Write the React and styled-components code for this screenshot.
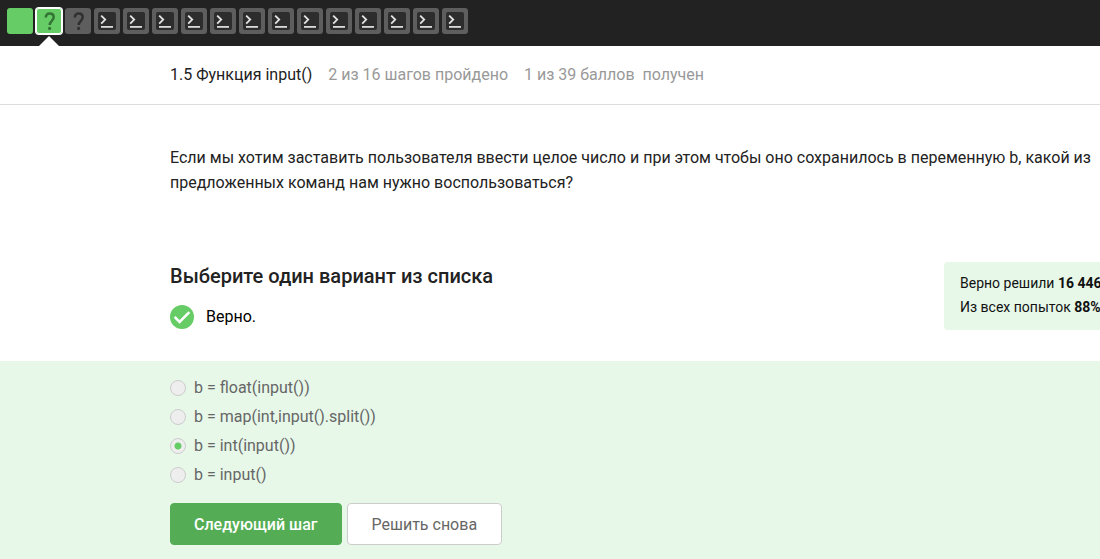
import React, { useState } from "react";
import styled, { createGlobalStyle } from "styled-components";

const GlobalStyle = createGlobalStyle`
  *, *::before, *::after { box-sizing: border-box; }
  body {
    margin: 0;
    background: #fff;
    color: #222;
    font-family: Roboto, "Liberation Sans", sans-serif;
    font-size: 16px;
    line-height: 24px;
    overflow-x: hidden;
  }
`;

const StepBar = styled.nav`
  display: flex;
  gap: 3px;
  height: 46px;
  padding: 8px 7px;
  background: #222;
`;

const StepLink = styled.a`
  position: relative;
  display: block;
  width: 26px;
  height: 26px;
  border-radius: 3px;
  background: ${(p) => (p.$passed ? "#66cc66" : "#5e5e5e")};
  box-shadow: ${(p) => (p.$current ? "0 0 0 1px #fff, inset 0 0 0 1px #fff" : "none")};

  &::after {
    content: "";
    display: ${(p) => (p.$current ? "block" : "none")};
    position: absolute;
    top: 28px;
    left: 3px;
    border: 10px solid transparent;
    border-top: 0;
    border-bottom-color: #fff;
  }

  svg { display: block; }
`;

const LessonHeader = styled.header`
  display: flex;
  align-items: center;
  gap: 16px;
  height: 59px;
  padding-left: 170px;
  border-bottom: 1px solid #ddd;
`;

const LessonTitle = styled.h1`
  margin: 0;
  font-size: 16px;
  font-weight: 400;
`;

const Progress = styled.span`
  color: #999;
  white-space: pre;
`;

const Question = styled.p`
  margin: 0;
  padding: 40px 8px 0 170px;
  line-height: 25px;
`;

const ResultRow = styled.section`
  display: flex;
  justify-content: space-between;
  padding: 67px 0 31px 170px;
`;

const TaskTitle = styled.h2`
  margin: 0;
  font-size: 20px;
  font-weight: 500;
  line-height: 28px;
`;

const Verdict = styled.p`
  display: flex;
  align-items: center;
  gap: 12px;
  margin: 15px 0 0;
  color: #000;
`;

const Stats = styled.aside`
  flex: none;
  width: 156px;
  height: 68px;
  padding: 9px 0 0 16px;
  border-radius: 4px 0 0 4px;
  background: #e7f8e9;
  color: #111;
  font-size: 14px;
  white-space: nowrap;
  overflow: hidden;

  p { margin: 0; }
`;

const Quiz = styled.form`
  min-height: 198px;
  padding: 15px 0 14px 170px;
  background: #e7f8e9;
`;

const Options = styled.fieldset`
  display: grid;
  gap: 5px;
  justify-items: start;
  margin: 0;
  padding: 0;
  border: 0;
`;

const Option = styled.label`
  display: flex;
  align-items: center;
  gap: 8px;
  color: #666;
`;

const Radio = styled.input`
  appearance: none;
  width: 16px;
  height: 16px;
  margin: 0;
  border: 1px solid #ccc;
  border-radius: 50%;
  background: #eee;

  &:checked {
    background: radial-gradient(circle, #66cc66 3px, #eee 4px);
  }
`;

const Actions = styled.div`
  display: flex;
  gap: 5px;
  margin-top: 16px;
`;

const Button = styled.button`
  height: 42px;
  padding: 0 24px;
  border: 1px solid ${(p) => (p.$primary ? "#54ad54" : "#ccc")};
  border-radius: 4px;
  background: ${(p) => (p.$primary ? "#54ad54" : "#fff")};
  color: ${(p) => (p.$primary ? "#fff" : "#666")};
  font: ${(p) => (p.$primary ? 500 : 400)} 16px Roboto, "Liberation Sans", sans-serif;
  ${(p) => p.$primary && "padding: 0 23px;"}
`;

const QuestionIcon = ({ color }) => (
  <svg width="26" height="26" viewBox="0 0 26 26" fill="none" aria-hidden="true">
    <path d="M9.8 9.6C9.8 6.9 11.2 5.5 13.7 5.5c2.6 0 4 1.4 4 3.8 0 3.4-4 3.7-4 7.7" stroke={color} strokeWidth="2.5" />
    <circle cx="13.6" cy="20.4" r="1.6" fill={color} />
  </svg>
);

const TerminalIcon = () => (
  <svg width="26" height="26" viewBox="0 0 26 26" fill="none" aria-hidden="true">
    <rect x="4" y="4" width="18" height="18" rx="2" fill="#2d2d2d" />
    <path d="M7.2 7.6l4 4-4 4" stroke="#e4e4e4" strokeWidth="1.8" />
    <path d="M7 18.9h12" stroke="#e4e4e4" strokeWidth="1.7" />
  </svg>
);

const CheckIcon = () => (
  <svg width="24" height="24" viewBox="0 0 24 24" fill="none" aria-hidden="true">
    <circle cx="12" cy="12" r="12" fill="#66cc66" />
    <path d="M4.6 11.8l5 5L19.3 7.2" stroke="#fff" strokeWidth="2.6" />
  </svg>
);

const options = ["b = float(input())", "b = map(int,input().split())", "b = int(input())", "b = input()"];

export default function App() {
  const [answer, setAnswer] = useState(2);
  return (
    <>
      <GlobalStyle />
      <StepBar>
        <StepLink href="#1" $passed aria-label="1" />
        <StepLink href="#2" $passed $current aria-label="2"><QuestionIcon color="#337333" /></StepLink>
        <StepLink href="#3" aria-label="3"><QuestionIcon color="#303030" /></StepLink>
        {Array.from({ length: 13 }, (_, i) => (
          <StepLink key={i} href={`#${i + 4}`} aria-label={String(i + 4)}><TerminalIcon /></StepLink>
        ))}
      </StepBar>
      <LessonHeader>
        <LessonTitle>1.5 Функция input()</LessonTitle>
        <Progress>2 из 16 шагов пройдено</Progress>
        <Progress>1 из 39 баллов{"  "}получен</Progress>
      </LessonHeader>
      <main>
        <Question>
          Если мы хотим заставить пользователя ввести целое число и при этом чтобы оно сохранилось в переменную b, какой из предложенных команд нам нужно воспользоваться?
        </Question>
        <ResultRow>
          <div>
            <TaskTitle>Выберите один вариант из списка</TaskTitle>
            <Verdict><CheckIcon />Верно.</Verdict>
          </div>
          <Stats>
            <p>Верно решили <b>16 446</b></p>
            <p>Из всех попыток <b>88%</b></p>
          </Stats>
        </ResultRow>
        <Quiz onSubmit={(e) => e.preventDefault()}>
          <Options>
            {options.map((text, i) => (
              <Option key={text}>
                <Radio type="radio" name="answer" checked={answer === i} onChange={() => setAnswer(i)} />
                {text}
              </Option>
            ))}
          </Options>
          <Actions>
            <Button type="submit" $primary>Следующий шаг</Button>
            <Button type="button">Решить снова</Button>
          </Actions>
        </Quiz>
      </main>
    </>
  );
}
